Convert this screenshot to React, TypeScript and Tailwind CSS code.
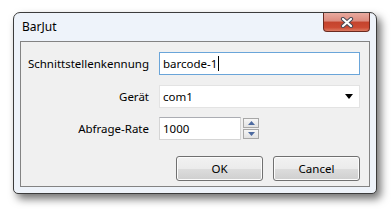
import React from "react";

const font = "font-['Noto_Sans','Liberation_Sans',sans-serif]";

function CloseButton() {
    return (
        <div className="relative flex h-[19px] w-[47px] items-center justify-center rounded-b-[4px] border border-t-0 border-[#6b2a20] bg-[linear-gradient(to_bottom,#e9aa9f_0%,#dc8b7e_45%,#c4432d_50%,#cc4a33_80%,#dc7a62_100%)]">
            <svg width="14" height="11" viewBox="0 0 14 11">
                <path d="M3 2 L11 9 M11 2 L3 9" stroke="#4a4a55" strokeWidth="4.2" strokeLinecap="round" />
                <path d="M3 2 L11 9 M11 2 L3 9" stroke="#ffffff" strokeWidth="2.2" strokeLinecap="round" />
            </svg>
        </div>
    );
}

function Label({ children }: { children: React.ReactNode }) {
    return <div className="flex h-[23px] items-center justify-end text-[11.5px] text-black">{children}</div>;
}

function SpinButton({ up }: { up: boolean }) {
    return (
        <div className="flex h-[10px] w-[16px] items-center justify-center border border-[#a7a7a7] bg-[linear-gradient(to_bottom,#f6f6f6,#e2e2e2)]">
            <svg width="7" height="4" viewBox="0 0 7 4">
                {up ? <path d="M0 4 L3.5 0 L7 4 Z" fill="#4d6aa0" /> : <path d="M0 0 L3.5 4 L7 0 Z" fill="#4d6aa0" />}
            </svg>
        </div>
    );
}

function DialogButton({ children }: { children: React.ReactNode }) {
    return (
        <button className="flex h-[25px] w-[87px] items-center justify-center rounded-[3px] border border-[#707070] bg-[linear-gradient(to_bottom,#f2f2f2_0%,#ebebeb_50%,#dddddd_51%,#cfcfcf_100%)] text-[11.5px] text-black shadow-[inset_0_0_0_1px_#fcfcfc]">
            {children}
        </button>
    );
}

export default function App() {
    return (
        <div className={`h-[210px] w-[392px] bg-white pl-[13px] pt-[12px] ${font}`}>
            <div className="flex h-[182px] w-[364px] flex-col rounded-t-[7px] rounded-b-[5px] border border-[#3c3c3c] bg-[#eef3fa] px-[6px] pb-[6px] shadow-[4px_5px_9px_rgba(0,0,0,0.55)]">
                <div className="flex h-[28px] items-start justify-between">
                    <span className="pl-[2px] pt-[5px] text-[12px] text-black">BarJut</span>
                    <CloseButton />
                </div>

                <div className="flex flex-1 flex-col border border-[#838383] bg-[#f0f0f0] pl-[10px] pr-[9px] pt-[10px]">
                    <div className="grid grid-cols-[118px_1fr] gap-x-[10px]">
                        <Label>Schnittstellenkennung</Label>
                        <div className="flex h-[23px] items-center border border-[#6aa5d9] bg-white pl-[3px] text-[11.5px] text-black">
                            barcode-1
                            <span className="ml-[1px] h-[15px] w-px bg-black" />
                        </div>

                        <div className="h-[10px]" />
                        <div className="h-[10px]" />

                        <Label>Gerät</Label>
                        <div className="flex h-[23px] items-center justify-between border border-[#e3e3e3] bg-white pl-[3px] pr-[6px] text-[11.5px] text-black">
                            com1
                            <svg width="8" height="5" viewBox="0 0 8 5">
                                <path d="M0 0 L8 0 L4 5 Z" fill="#000" />
                            </svg>
                        </div>

                        <div className="h-[9px]" />
                        <div className="h-[9px]" />

                        <Label>Abfrage-Rate</Label>
                        <div className="flex h-[23px] items-center gap-[2px]">
                            <div className="flex h-[23px] w-[82px] items-center border border-[#d5d5d5] border-t-[#abadb3] bg-white pl-[3px] text-[11.5px] text-black">
                                1000
                            </div>
                            <div className="flex flex-col gap-px">
                                <SpinButton up />
                                <SpinButton up={false} />
                            </div>
                        </div>
                    </div>

                    <div className="mt-[16px] flex justify-end gap-[10px]">
                        <DialogButton>OK</DialogButton>
                        <DialogButton>Cancel</DialogButton>
                    </div>
                </div>
            </div>
        </div>
    );
}
